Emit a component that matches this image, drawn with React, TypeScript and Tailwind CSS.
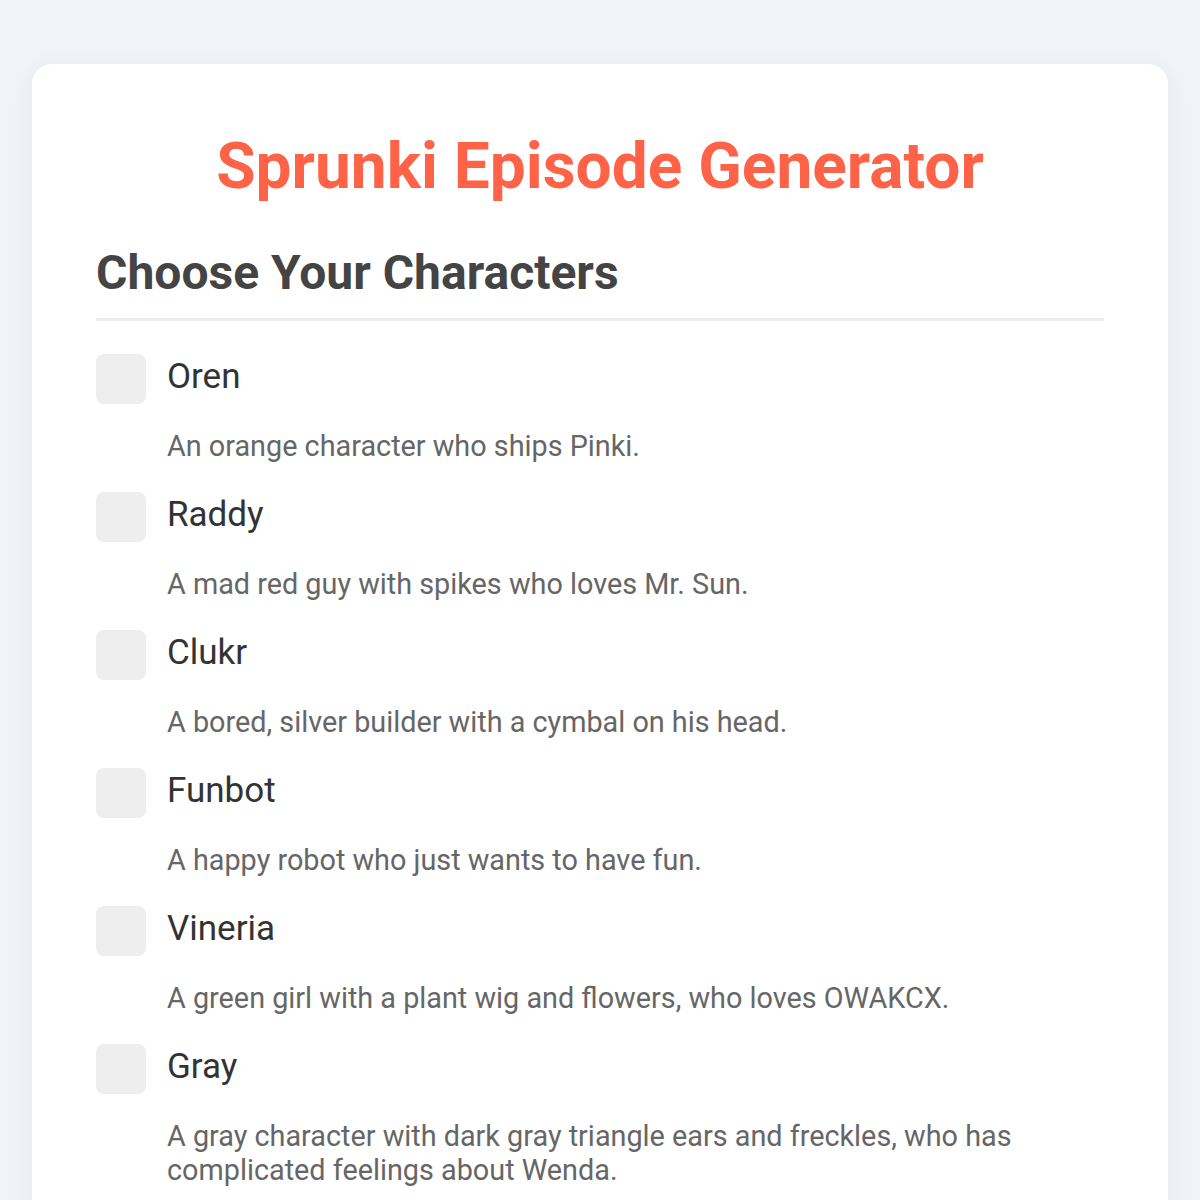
import React from 'react';

const characters = [
  { name: 'Oren', description: 'An orange character who ships Pinki.' },
  { name: 'Raddy', description: 'A mad red guy with spikes who loves Mr. Sun.' },
  { name: 'Clukr', description: 'A bored, silver builder with a cymbal on his head.' },
  { name: 'Funbot', description: 'A happy robot who just wants to have fun.' },
  { name: 'Vineria', description: 'A green girl with a plant wig and flowers, who loves OWAKCX.' },
  {
    name: 'Gray',
    description: 'A gray character with dark gray triangle ears and freckles, who has complicated feelings about Wenda.',
  },
];

const App = () => {
  return (
    <div className="min-h-screen bg-[#f0f4f8] px-8 pt-16 font-['Roboto',sans-serif]">
      <div className="rounded-[20px] bg-white px-16 pt-[65px] pb-16 shadow-[0_4px_24px_rgba(0,0,0,0.06)]">
        <h1 className="text-center text-[64px] font-bold leading-[1.2] text-[#ff6347]">
          Sprunki Episode Generator
        </h1>
        <h2 className="mt-[38px] border-b-[3px] border-[#eeeeee] pb-[17px] text-[48px] font-bold leading-[1.2] text-[#444444]">
          Choose Your Characters
        </h2>
        <div className="mt-[33px]">
          {characters.map((c) => (
            <div key={c.name} className="mb-[29px]">
              <label className="flex items-start gap-[21px]">
                <span className="h-[50px] w-[50px] shrink-0 rounded-[8px] bg-[#eeeeee]" />
                <span className="text-[35px] leading-[46px] text-[#333333]">{c.name}</span>
              </label>
              <p className="mt-[25px] pl-[71px] text-[28.8px] leading-[34px] text-[#666666]">{c.description}</p>
            </div>
          ))}
        </div>
      </div>
    </div>
  );
};

export default App;
